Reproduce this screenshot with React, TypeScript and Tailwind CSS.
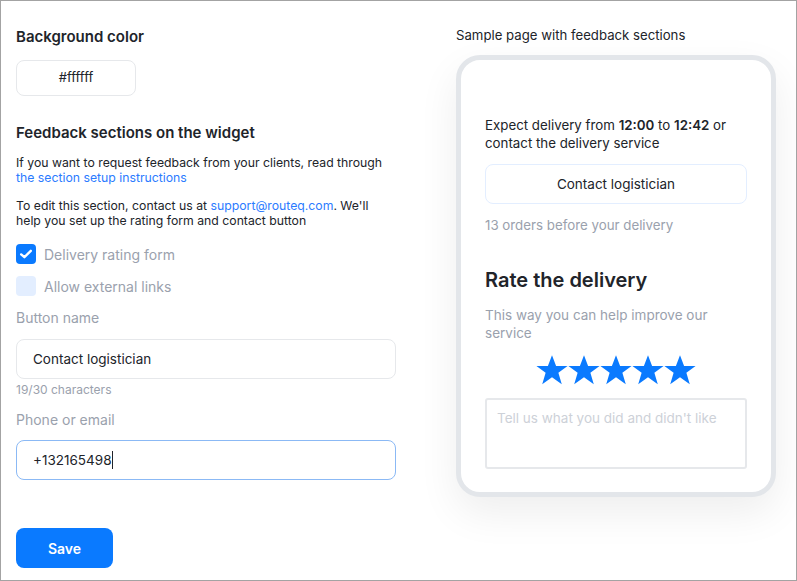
import { useState } from "react";

function Star() {
  return (
    <svg viewBox="0 0 24 24" className="w-[34px] h-[34px] -mx-px" fill="#0a7aff">
      <path d="M12 1.5l2.9 7.6h8.1l-6.5 4.9 2.4 8-6.9-4.8-6.9 4.8 2.4-8L1 9.1h8.1z" />
    </svg>
  );
}

function Checkbox({ checked, label }: { checked: boolean; label: string }) {
  return (
    <label className="flex items-center gap-2 h-5">
      <span
        className={
          checked
            ? "w-5 h-5 rounded-[4px] bg-[#0a7aff] flex items-center justify-center"
            : "w-5 h-5 rounded-[4px] bg-[#e3eeff]"
        }
      >
        {checked && (
          <svg viewBox="0 0 20 20" className="w-4 h-4" fill="none" stroke="white" strokeWidth="3">
            <path d="M4 10.5l4 3.5 8-8" strokeLinecap="round" strokeLinejoin="round" />
          </svg>
        )}
      </span>
      <span className="text-[14px] text-[#9aa1ad]">{label}</span>
    </label>
  );
}

export default function App() {
  const [name, setName] = useState("Contact logistician");
  const phone = "+132165498";

  return (
    <div
      className="w-[797px] h-[581px] border border-[#a3a3a3] bg-white flex text-[#21242a] overflow-hidden"
      style={{ fontFamily: "Inter, 'Noto Sans', sans-serif" }}
    >
      <div className="w-[440px] pl-[15px] pt-[26px] flex flex-col">
        <h2 className="text-[15px] font-semibold leading-[20px]">Background color</h2>
        <div className="mt-[13px] w-[120px] h-[36px] rounded-[8px] border border-[#e6e8eb] flex items-center justify-center text-[13px]">
          #ffffff
        </div>
        <h2 className="mt-[27px] text-[15px] font-semibold leading-[20px]">Feedback sections on the widget</h2>
        <p className="mt-[12px] text-[12.25px] leading-[15px] w-[380px]">
          If you want to request feedback from your clients, read through{" "}
          <span className="text-[#2b7bff]">the section setup instructions</span>
        </p>
        <p className="mt-[13px] text-[12.25px] leading-[15px] w-[380px]">
          To edit this section, contact us at <span className="text-[#2b7bff]">support@routeq.com</span>. We'll
          help you set up the rating form and contact button
        </p>
        <div className="mt-[16px] flex flex-col gap-[12px]">
          <Checkbox checked label="Delivery rating form" />
          <Checkbox checked={false} label="Allow external links" />
        </div>
        <div className="mt-[12px] text-[14px] text-[#9aa1ad] leading-[20px]">Button name</div>
        <input
          value={name}
          onChange={(e) => setName(e.target.value)}
          className="mt-[11px] w-[380px] h-[40px] rounded-[8px] border border-[#e6e8eb] px-[16px] text-[13.5px] outline-none"
        />
        <div className="mt-[3px] text-[12px] text-[#9aa1ad] leading-[16px]">19/30 characters</div>
        <div className="mt-[12px] text-[14px] text-[#9aa1ad] leading-[20px]">Phone or email</div>
        <div className="mt-[10px] w-[380px] h-[40px] rounded-[8px] border border-[#8bb9f5] px-[16px] flex items-center text-[13.5px]">
          <span>{phone}</span>
          <span className="w-px h-[18px] bg-[#21242a]" />
        </div>
        <button className="mt-[48px] w-[97px] h-[40px] rounded-[8px] bg-[#0a7aff] text-white text-[14px] font-semibold">
          Save
        </button>
      </div>

      <div className="flex-1 pl-[15px] pt-[25px] flex flex-col">
        <div className="text-[13.2px] leading-[18px]">Sample page with feedback sections</div>
        <div className="mt-[11px] w-[320px] h-[442px] rounded-[24px] border-[5px] border-[#e3e6ea] bg-white shadow-[0_16px_40px_rgba(0,0,0,0.07)] pl-[24px] pr-[24px] pt-[56px]">
          <p className="text-[13.3px] leading-[18px] pr-[20px]">
            Expect delivery from <b className="font-semibold">12:00</b> to <b className="font-semibold">12:42</b> or
            contact the delivery service
          </p>
          <div className="mt-[12px] h-[40px] rounded-[8px] border border-[#e3eeff] flex items-center justify-center text-[13.5px]">
            Contact logistician
          </div>
          <div className="mt-[12px] text-[13.3px] text-[#9aa1ad] leading-[18px]">13 orders before your delivery</div>
          <h3 className="mt-[33px] text-[20px] font-semibold leading-[26px]">Rate the delivery</h3>
          <p className="mt-[13px] text-[13.5px] leading-[18px] text-[#9aa1ad] pr-[30px]">
            This way you can help improve our service
          </p>
          <div className="mt-[11px] flex justify-center">
            <Star />
            <Star />
            <Star />
            <Star />
            <Star />
          </div>
          <div className="mt-[11px] h-[71px] border-2 border-[#e6e8eb] rounded-[3px] px-[10px] pt-[8px] text-[13.5px] text-[#cdd1d8]">
            Tell us what you did and didn't like
          </div>
        </div>
      </div>
    </div>
  );
}
